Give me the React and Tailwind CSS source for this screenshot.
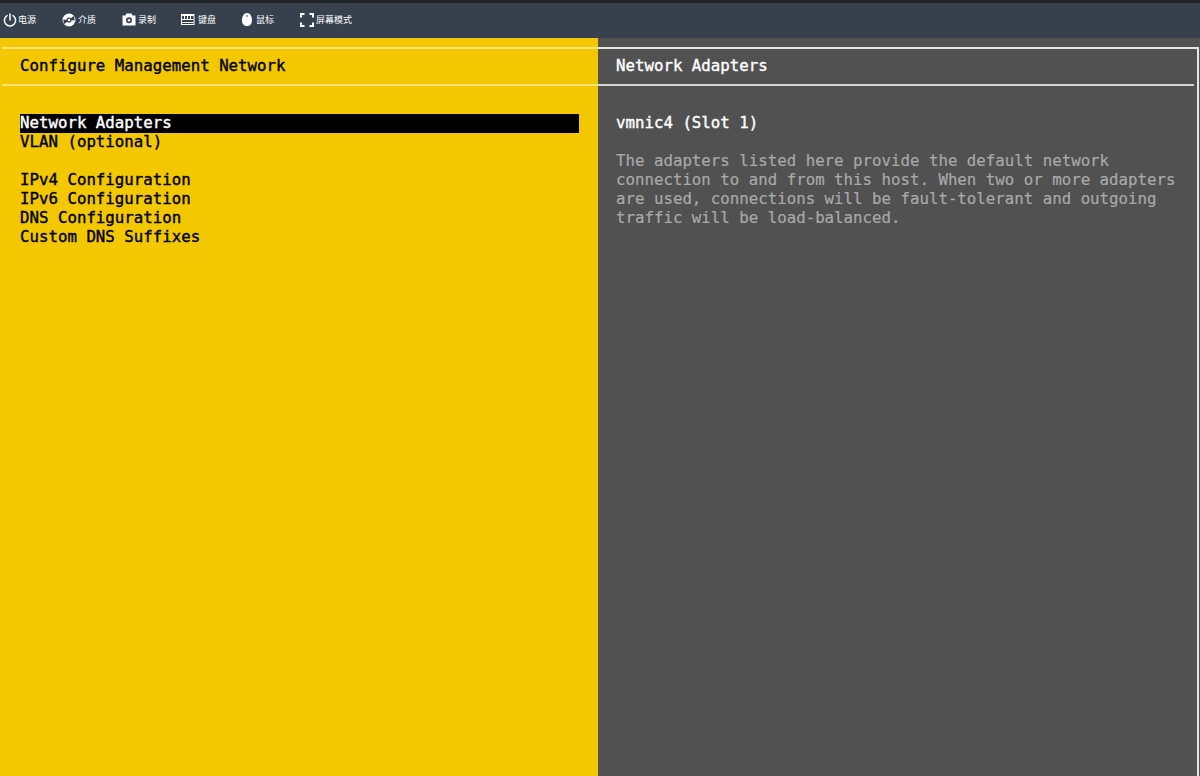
const tools = [
  { label: '电源', icon: 'power', box: 'w-[59px] gap-[1px]' },
  { label: '介质', icon: 'disc', box: 'w-[60px] gap-[2px]' },
  { label: '录制', icon: 'camera', box: 'w-[59px] gap-[2px]' },
  { label: '键盘', icon: 'keyboard', box: 'w-[61px] gap-[3px]' },
  { label: '鼠标', icon: 'mouse', box: 'w-[58px] gap-[4px]' },
  { label: '屏幕模式', icon: 'screen', box: 'w-[60px] gap-[2px]' },
]

const ToolIcon = ({ name }) => {
  if (name === 'power') {
    return (
      <svg width="14" height="14" viewBox="0 0 14 14" fill="none" stroke="white" strokeWidth="1.5" strokeLinecap="round">
        <path d="M4 2.6a5.6 5.6 0 1 0 6 0" />
        <path d="M7 1v6" />
      </svg>
    )
  }
  if (name === 'disc') {
    return (
      <svg width="14" height="14" viewBox="0 0 14 14">
        <circle cx="7" cy="7" r="6.5" fill="white" />
        <path d="M7 7 L11.5 3 A6 6 0 0 1 12.6 7.5 Z M7 7 L2.5 11 A6 6 0 0 1 1.4 6.5 Z" fill="#36414d" />
        <circle cx="7" cy="7" r="2.6" fill="#36414d" />
        <circle cx="7" cy="7" r="1.3" fill="white" />
      </svg>
    )
  }
  if (name === 'camera') {
    return (
      <svg width="14" height="13" viewBox="0 0 14 13">
        <path d="M0.5 2.5h3l1-2h5l1 2h3v10h-13z" fill="white" />
        <circle cx="7" cy="7.2" r="3" fill="#36414d" />
        <circle cx="7" cy="7.2" r="1.2" fill="white" />
      </svg>
    )
  }
  if (name === 'keyboard') {
    return (
      <svg width="14" height="11" viewBox="0 0 14 11" fill="none">
        <rect x="0.5" y="0.5" width="12.5" height="10" stroke="white" />
        <path d="M0.5 1.5h12.5M3.5 2v3.5M6.5 2v3.5M9.5 2v3.5M1 5.5h11.5M1 8.5h11.5" stroke="white" />
      </svg>
    )
  }
  if (name === 'mouse') {
    return (
      <svg width="10" height="13" viewBox="0 0 10 13">
        <path d="M5 0C8 0 10 3 10 7.5 10 11 8 13 5 13 2 13 0 11 0 7.5 0 3 2 0 5 0z" fill="white" />
        <path d="M5 2v2" stroke="#36414d" />
      </svg>
    )
  }
  return (
    <svg width="14" height="14" viewBox="0 0 14 14" fill="none" stroke="white" strokeWidth="2">
      <path d="M1 4.5V1h3.5M9.5 1H13v3.5M13 9.5V13H9.5M4.5 13H1V9.5" />
    </svg>
  )
}

const menu = ['Network Adapters', 'VLAN (optional)', '', 'IPv4 Configuration', 'IPv6 Configuration', 'DNS Configuration', 'Custom DNS Suffixes']

const help = [
  'The adapters listed here provide the default network',
  'connection to and from this host. When two or more adapters',
  'are used, connections will be fault-tolerant and outgoing',
  'traffic will be load-balanced.',
]

const App = () => {
  return (
    <div className="w-[1200px] h-[776px] overflow-hidden flex flex-col bg-[#515151] font-['DejaVu_Sans_Mono',monospace] text-[15.75px] leading-[19px]">
      {/* Toolbar */}
      <div className="h-[38px] shrink-0 flex items-center pl-[3px] pb-[2px] bg-[#36414d] border-t-[3px] border-[#1d2329] box-border">
        {tools.map((tool) => (
          <div key={tool.label} className={`${tool.box} flex items-center shrink-0 text-white`}>
            <ToolIcon name={tool.icon} />
            <span className="font-['Noto_Sans_CJK_SC',sans-serif] text-[9px] leading-[14px] whitespace-nowrap">{tool.label}</span>
          </div>
        ))}
      </div>

      <div className="flex flex-1 min-h-0">
        {/* Menu side */}
        <div className="w-[598px] shrink-0 bg-[#f3c800] pt-[9px] pl-[2px] text-black [-webkit-text-stroke:0.4px_black]">
          <div className="h-[39px] border-y-2 border-[#f8e27a] flex items-center pl-[18px] pb-[2px]">
            Configure Management Network
          </div>
          <div className="pt-[28px] pl-[18px] w-[577px]">
            {menu.map((item, index) => (
              <div
                key={index}
                className={`h-[19px] leading-[17px] whitespace-pre ${index === 0 ? 'bg-black text-white [-webkit-text-stroke:0.4px_white]' : ''}`}
              >
                {item}
              </div>
            ))}
          </div>
        </div>

        {/* Help side */}
        <div className="flex-1 pt-[9px] pr-[1px]">
          <div className="h-full border-t-2 border-r-2 border-[#e4e4e4] text-white">
            <div className="h-[37px] mr-[3px] border-b-2 border-[#d4d4d4] flex items-center pl-[18px] pb-[3px] [-webkit-text-stroke:0.4px_white]">
              Network Adapters
            </div>
            <div className="pt-[27px] pl-[18px]">
              <div className="[-webkit-text-stroke:0.4px_white]">vmnic4 (Slot 1)</div>
              <div className="mt-[19px] text-[#a9a9a9] whitespace-pre [-webkit-text-stroke:0.2px_#a9a9a9]">
                {help.map((line) => (
                  <div key={line}>{line}</div>
                ))}
              </div>
            </div>
          </div>
        </div>
      </div>
    </div>
  )
}

export default App
